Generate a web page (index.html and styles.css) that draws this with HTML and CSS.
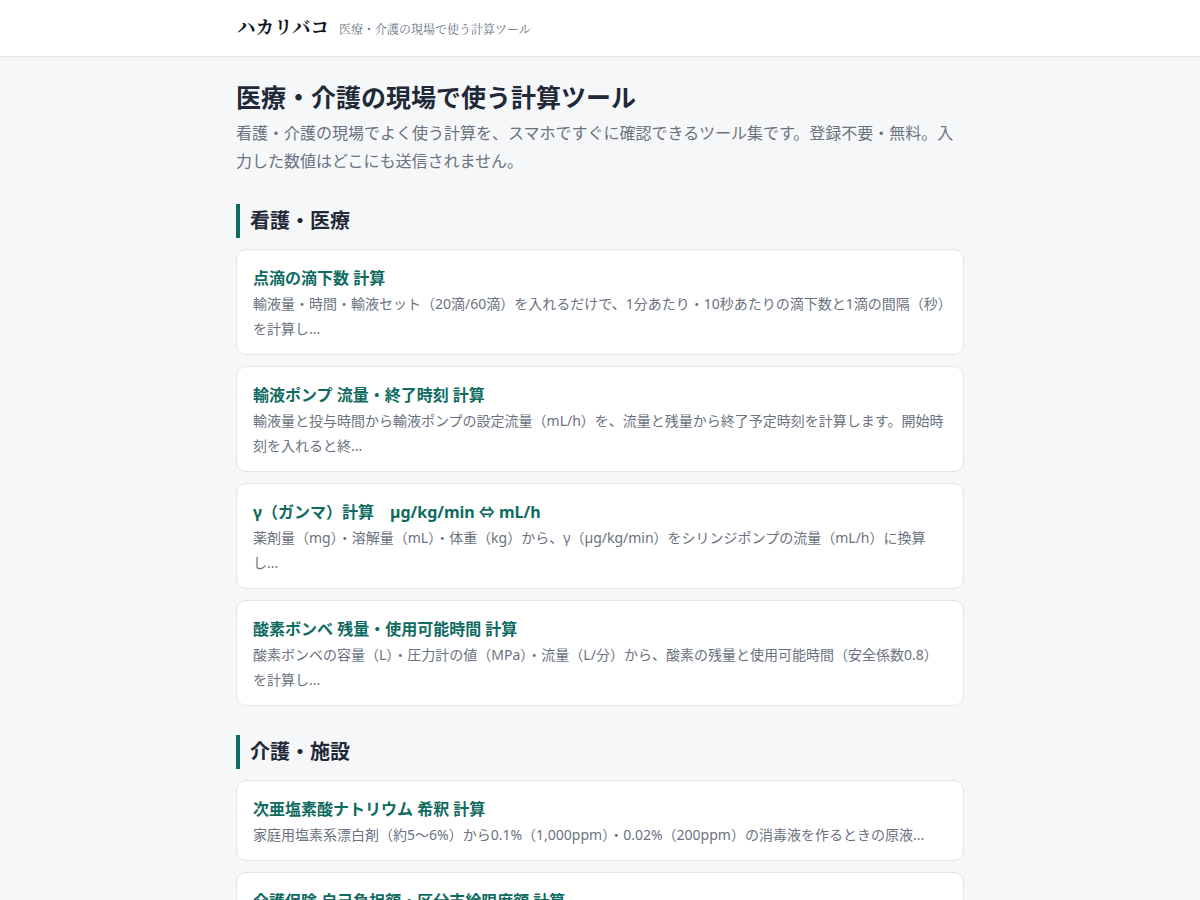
FILE: index.html
```
<!DOCTYPE html>
<html lang="ja">
<head>
    <meta charset="UTF-8">
    <meta name="viewport" content="width=device-width, initial-scale=1.0">
    <title>ハカリバコ | 医療・介護の現場で使う計算ツール</title>
    <link rel="stylesheet" href="styles.css">
</head>
<body>

<header class="site-header">
    <div class="container header-inner">
        <a class="logo" href="#">ハカリバコ</a>
        <span class="tagline">医療・介護の現場で使う計算ツール</span>
    </div>
</header>

<main class="container main">
    <h1 class="page-title">医療・介護の現場で使う計算ツール</h1>
    <p class="lead">看護・介護の現場でよく使う計算を、スマホですぐに確認できるツール集です。登録不要・無料。入力した数値はどこにも送信されません。</p>

    <!-- 看護・医療 -->
    <section class="category">
        <h2 class="category-title">看護・医療</h2>
        <ul class="tool-list">
            <li><a class="tool-card" href="#">
                <span class="tool-name">点滴の滴下数 計算</span>
                <span class="tool-desc">輸液量・時間・輸液セット（20滴/60滴）を入れるだけで、1分あたり・10秒あたりの滴下数と1滴の間隔（秒）を計算し...</span>
            </a></li>
            <li><a class="tool-card" href="#">
                <span class="tool-name">輸液ポンプ 流量・終了時刻 計算</span>
                <span class="tool-desc">輸液量と投与時間から輸液ポンプの設定流量（mL/h）を、流量と残量から終了予定時刻を計算します。開始時刻を入れると終...</span>
            </a></li>
            <li><a class="tool-card" href="#">
                <span class="tool-name">γ（ガンマ）計算　µg/kg/min ⇔ mL/h</span>
                <span class="tool-desc">薬剤量（mg）・溶解量（mL）・体重（kg）から、γ（µg/kg/min）をシリンジポンプの流量（mL/h）に換算し...</span>
            </a></li>
            <li><a class="tool-card" href="#">
                <span class="tool-name">酸素ボンベ 残量・使用可能時間 計算</span>
                <span class="tool-desc">酸素ボンベの容量（L）・圧力計の値（MPa）・流量（L/分）から、酸素の残量と使用可能時間（安全係数0.8）を計算し...</span>
            </a></li>
        </ul>
    </section>

    <!-- 介護・施設 -->
    <section class="category">
        <h2 class="category-title">介護・施設</h2>
        <ul class="tool-list">
            <li><a class="tool-card" href="#">
                <span class="tool-name">次亜塩素酸ナトリウム 希釈 計算</span>
                <span class="tool-desc">家庭用塩素系漂白剤（約5〜6%）から0.1%（1,000ppm）・0.02%（200ppm）の消毒液を作るときの原液...</span>
            </a></li>
            <li><a class="tool-card" href="#">
                <span class="tool-name">介護保険 自己負担額・区分支給限度額 計算</span>
                <span class="tool-desc">要介護度と利用したサービスの単位数から、1割・2割・3割の自己負担額と区分支給限度額までの残りを計算し...</span>
            </a></li>
        </ul>
    </section>
</main>

</body>
</html>
```

FILE: styles.css
```
* {
    box-sizing: border-box;
}

html, body {
    margin: 0;
    padding: 0;
}

body {
    background-color: #f6f7f9;
    color: #1f2937;
    font-family: "Noto Sans", "Noto Sans CJK JP", sans-serif;
}

.container {
    width: 728px;
    margin: 0 auto;
}

/* ヘッダー */
.site-header {
    background-color: #fff;
    border-bottom: 1px solid #e2e5e9;
    height: 57px;
}

.header-inner {
    display: flex;
    align-items: baseline;
    gap: 10px;
    padding-top: 13px;
    padding-left: 1px;
    font-family: "Noto Serif CJK JP", "Liberation Serif", serif;
}

.logo {
    font-size: 18.5px;
    font-weight: bold;
    color: #111827;
    text-decoration: none;
}

.tagline {
    font-size: 12px;
    color: #6b7280;
}

/* メイン */
.main {
    padding: 23px 0 40px;
}

.page-title {
    margin: 0 0 4px;
    font-size: 25px;
    line-height: 1.4;
    font-weight: bold;
    color: #1f2937;
}

.lead {
    margin: 0;
    font-size: 16px;
    line-height: 28px;
    color: #6b7280;
}

.category {
    margin-top: 29px;
}

.category-title {
    margin: 0 0 11px;
    padding-left: 10px;
    border-left: 4px solid #0f6b60;
    font-size: 20px;
    line-height: 34px;
    font-weight: bold;
    color: #1f2937;
}

.tool-list {
    list-style: none;
    margin: 0;
    padding: 0;
    display: flex;
    flex-direction: column;
    gap: 11px;
}

.tool-card {
    display: block;
    background-color: #fff;
    border: 1px solid #e2e5e9;
    border-radius: 10px;
    padding: 16px 16px 13px;
    text-decoration: none;
}

.tool-name {
    display: block;
    font-size: 16px;
    line-height: 24px;
    font-weight: bold;
    color: #0f6b60;
}

.tool-desc {
    display: block;
    margin-top: 1px;
    font-size: 14px;
    line-height: 25px;
    color: #6b7280;
}
```
